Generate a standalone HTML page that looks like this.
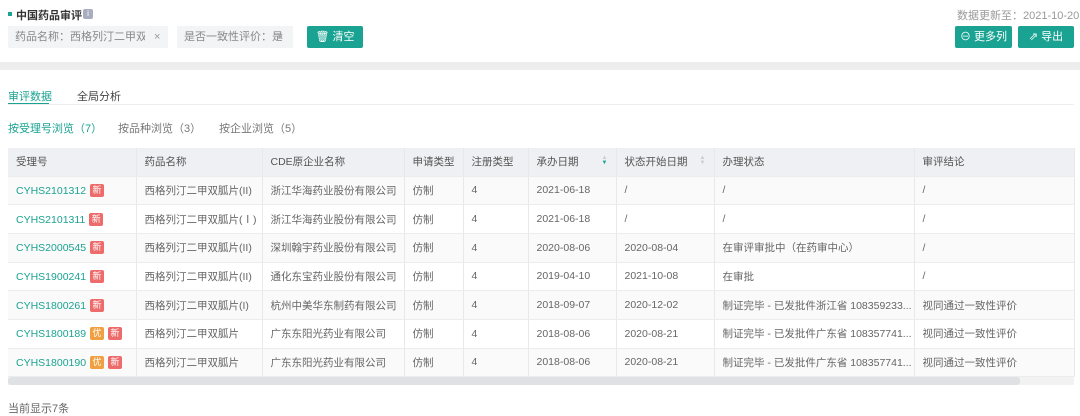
<!DOCTYPE html>
<html><head><meta charset="utf-8"><style>
*{margin:0;padding:0;box-sizing:border-box}
body{width:1080px;height:412px;background:#fff;font-family:"Liberation Sans","Noto Sans CJK SC",sans-serif;font-size:11px;color:#555;position:relative;overflow:hidden}
.a{position:absolute;white-space:nowrap}
.tag{position:absolute;height:22px;background:#f3f4f6;color:#888;line-height:22px;padding-left:7px;font-size:11px;overflow:hidden;white-space:nowrap}
.btn{position:absolute;background:#1aa392;color:#fff;height:22px;line-height:22px;font-size:11px;text-align:center;border-radius:2px}
table{position:absolute;left:8px;top:148px;width:1066px;border-collapse:collapse;table-layout:fixed}
td,th{height:28.7px;border-right:1px solid #e8e8e8;border-bottom:1px solid #ececec;padding-left:8px;text-align:left;font-weight:normal;white-space:nowrap;overflow:hidden;font-size:10.5px;color:#666}
th{background:#eef0f3;color:#555;height:28px}
tr:nth-child(even) td{background:#fafafa}
td:first-child{color:#1aa392}
.n,.y{display:inline-block;width:14px;height:13px;line-height:13px;color:#fff;font-size:9px;text-align:center;border-radius:2px;margin-left:4px;vertical-align:1px}
.n{background:#ed6b6b}.y{background:#f0a040}
.s{float:right;margin-right:8px;font-size:6px;line-height:5px;margin-top:2px;color:#ccc}
</style></head><body>
<div class="a" style="left:8px;top:12px;width:4px;height:4px;background:#1aa392"></div>
<div class="a" style="left:16px;top:7px;font-size:11px;font-weight:bold;color:#333">中国药品审评</div>
<div class="a" style="left:83px;top:9px;width:10px;height:10px;background:#a8aec0;border-radius:2px;color:#fff;font-size:8px;text-align:center;line-height:10px">i</div>
<div class="tag" style="left:8px;top:26px;width:160px"><span style="display:inline-block;width:130px;overflow:hidden">药品名称：西格列汀二甲双...</span><span style="position:absolute;left:146px;color:#999">×</span></div>
<div class="tag" style="left:177px;top:26px;width:116px"><span style="display:inline-block;width:98px;overflow:hidden">是否一致性评价：是</span><span style="position:absolute;left:100px;color:#999">×</span></div>
<div class="btn" style="left:307px;top:26px;width:56px">🗑 清空</div>
<div class="a" style="left:957px;top:7px;color:#999;font-size:11px">数据更新至：2021-10-20</div>
<div class="btn" style="left:955px;top:26px;width:57px">⊖ 更多列</div>
<div class="btn" style="left:1018px;top:26px;width:56px">⇗ 导出</div>
<div class="a" style="left:0;top:62px;width:1080px;height:8px;background:#ededed"></div>
<div class="a" style="left:8px;top:88px;color:#1aa392">审评数据</div>
<div class="a" style="left:8px;top:103px;width:41px;height:2px;background:#1aa392"></div>
<div class="a" style="left:77px;top:88px;color:#444">全局分析</div>
<div class="a" style="left:8px;top:104px;width:1066px;height:1px;background:#eee"></div>
<div class="a" style="left:8px;top:120px;color:#1aa392">按受理号浏览（7）</div>
<div class="a" style="left:118px;top:120px;color:#777">按品种浏览（3）</div>
<div class="a" style="left:219px;top:120px;color:#777">按企业浏览（5）</div>
<table>
<colgroup><col style="width:128px"><col style="width:126px"><col style="width:142px"><col style="width:59px"><col style="width:65px"><col style="width:88px"><col style="width:98px"><col style="width:200px"><col style="width:160px"></colgroup>
<tr><th>受理号</th><th>药品名称</th><th>CDE原企业名称</th><th>申请类型</th><th>注册类型</th><th>承办日期<span class="s"><span style="color:#ccc">▲</span><br><span style="color:#1aa392">▼</span></span></th><th>状态开始日期<span class="s">▲<br>▼</span></th><th>办理状态</th><th>审评结论</th></tr>
<tr><td>CYHS2101312<span class="n">新</span></td><td>西格列汀二甲双胍片(II)</td><td>浙江华海药业股份有限公司</td><td>仿制</td><td>4</td><td>2021-06-18</td><td>/</td><td>/</td><td>/</td></tr>
<tr><td>CYHS2101311<span class="n">新</span></td><td>西格列汀二甲双胍片(Ⅰ)</td><td>浙江华海药业股份有限公司</td><td>仿制</td><td>4</td><td>2021-06-18</td><td>/</td><td>/</td><td>/</td></tr>
<tr><td>CYHS2000545<span class="n">新</span></td><td>西格列汀二甲双胍片(II)</td><td>深圳翰宇药业股份有限公司</td><td>仿制</td><td>4</td><td>2020-08-06</td><td>2020-08-04</td><td>在审评审批中（在药审中心）</td><td>/</td></tr>
<tr><td>CYHS1900241<span class="n">新</span></td><td>西格列汀二甲双胍片(II)</td><td>通化东宝药业股份有限公司</td><td>仿制</td><td>4</td><td>2019-04-10</td><td>2021-10-08</td><td>在审批</td><td>/</td></tr>
<tr><td>CYHS1800261<span class="n">新</span></td><td>西格列汀二甲双胍片(I)</td><td>杭州中美华东制药有限公司</td><td>仿制</td><td>4</td><td>2018-09-07</td><td>2020-12-02</td><td>制证完毕 - 已发批件浙江省 108359233...</td><td>视同通过一致性评价</td></tr>
<tr><td>CYHS1800189<span class="y">优</span><span class="n">新</span></td><td>西格列汀二甲双胍片</td><td>广东东阳光药业有限公司</td><td>仿制</td><td>4</td><td>2018-08-06</td><td>2020-08-21</td><td>制证完毕 - 已发批件广东省 108357741...</td><td>视同通过一致性评价</td></tr>
<tr><td>CYHS1800190<span class="y">优</span><span class="n">新</span></td><td>西格列汀二甲双胍片</td><td>广东东阳光药业有限公司</td><td>仿制</td><td>4</td><td>2018-08-06</td><td>2020-08-21</td><td>制证完毕 - 已发批件广东省 108357741...</td><td>视同通过一致性评价</td></tr>
</table>
<div class="a" style="left:8px;top:377px;width:1066px;height:8px;background:#f2f2f2"></div>
<div class="a" style="left:8px;top:377px;width:1012px;height:8px;background:#dfe1e4;border-radius:3px"></div>
<div class="a" style="left:8px;top:400px;color:#666">当前显示7条</div>
</body></html>
